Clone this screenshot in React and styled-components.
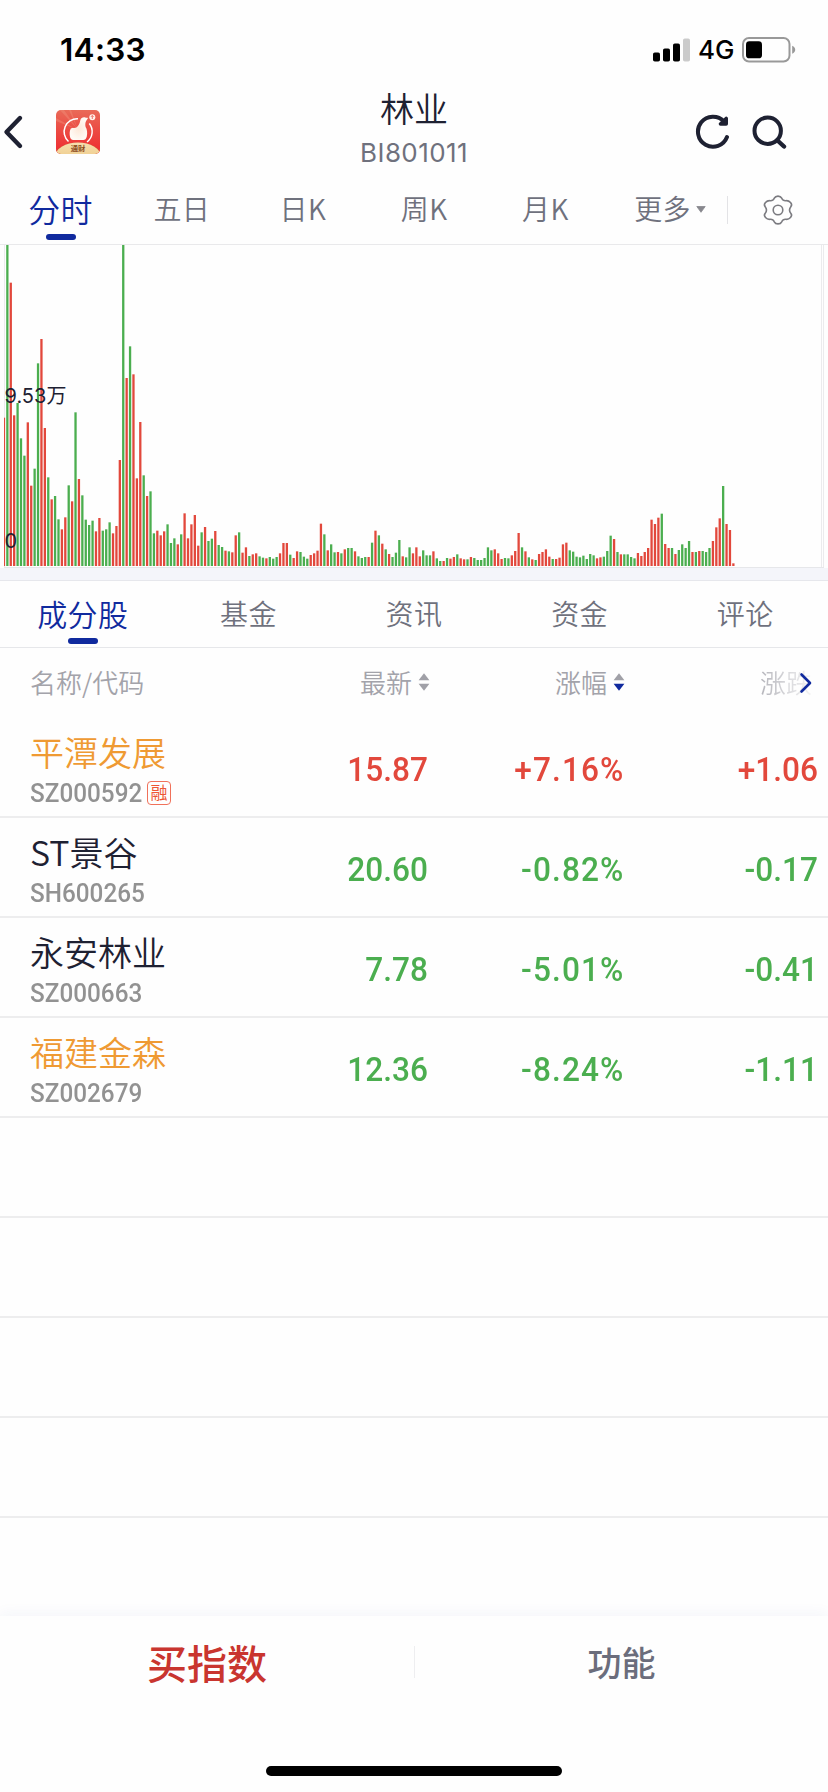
import React from "react";
import styled, { createGlobalStyle } from "styled-components";

const cjk = `"Noto Sans CJK SC", sans-serif`;
const ink = "#1e2132";
const blue = "#102a9e";
const grey = "#6f717d";
const red = "#e2483c";
const green = "#4bae4f";
const orange = "#ef9a33";

const Global = createGlobalStyle`
  * { box-sizing: border-box; }
  body { margin: 0; background: #fefefe; }
`;

const Screen = styled.div`
  width: 828px;
  height: 1792px;
  display: flex;
  flex-direction: column;
  overflow: hidden;
  background: #fefefe;
  color: ${ink};
  font-family: Inter, ${cjk};
`;

/* status bar */
const StatusBar = styled.div`
  height: 88px;
  padding: 12px 32px 0 60px;
  display: flex;
  align-items: center;
  justify-content: space-between;
  color: #000;
`;
const Clock = styled.div`
  font-size: 31.5px;
  font-weight: 600;
  line-height: 38px;
  letter-spacing: 0.3px;
`;
const StatusRight = styled.div`
  display: flex;
  align-items: center;
`;
const Network = styled.span`
  font-size: 26px;
  font-weight: 500;
  line-height: 30px;
  margin: 0 7px 0 7px;
  width: 37px;
`;

/* title bar */
const NavBar = styled.header`
  height: 88px;
  display: grid;
  grid-template-columns: 240px 1fr 240px;
  align-items: center;
`;
const NavLeft = styled.div`
  display: flex;
  align-items: center;
  gap: 32px;
  padding-left: 2px;
`;
const NavRight = styled.div`
  display: flex;
  align-items: center;
  justify-content: flex-end;
  gap: 20px;
  padding-right: 41px;
`;
const TitleBlock = styled.div`
  text-align: center;
`;
const Title = styled.h1`
  margin: -3px 0 3px;
  font: 350 34px/42px ${cjk};
`;
const Subtitle = styled.div`
  font-size: 26px;
  line-height: 42px;
  font-weight: 400;
  letter-spacing: 0.4px;
  color: ${grey};
`;

/* tabs */
const PeriodTabs = styled.nav`
  height: 69px;
  display: flex;
  border-bottom: 1px solid #e9e9eb;
`;
const SectionTabs = styled.nav`
  height: 67px;
  display: flex;
  border-bottom: 1px solid #e6e7ea;
`;
const Tab = styled.button`
  position: relative;
  width: ${(p) => p.$width}px;
  height: ${(p) => p.$height}px;
  padding: 0 0 ${(p) => (p.$active ? 4 : 3)}px;
  border: 0;
  background: none;
  display: flex;
  align-items: center;
  justify-content: center;
  font-family: ${cjk};
  font-weight: 350;
  font-size: ${(p) => (p.$active ? p.$activeSize : 28)}px;
  letter-spacing: 0.4px;
  line-height: 40px;
  color: ${(p) => (p.$active ? blue : grey)};
  &::after {
    content: "";
    display: ${(p) => (p.$active ? "block" : "none")};
    position: absolute;
    left: calc(50% - 15px);
    top: ${(p) => p.$underline}px;
    width: 30px;
    height: 6px;
    border-radius: 3px;
    background: ${blue};
  }
`;
const MoreArrow = styled.svg`
  margin: 2px -7px 0 5px;
`;
const TabDivider = styled.i`
  width: 1px;
  height: 28px;
  margin-top: 20px;
  background: #e3e3e6;
`;
const SettingsButton = styled.div`
  flex: 1;
  height: 68px;
  display: flex;
  align-items: center;
  justify-content: center;
`;

/* chart */
const Chart = styled.svg`
  display: block;
  width: 828px;
  height: 323px;
  flex: none;
`;
const ChartLabel = styled.text`
  font-family: Inter, ${cjk};
  font-size: 20px;
  fill: ${ink};
`;
const Band = styled.div`
  height: 13px;
  background: #f4f5fa;
  border-bottom: 1px solid #e6e7ec;
`;

/* table */
const TableHead = styled.div`
  height: 70px;
  padding-bottom: 2px;
  display: grid;
  grid-template-columns: 430px 195px 1fr;
  align-items: center;
  font: 350 26px/40px ${cjk};
  color: #a3a3aa;
`;
const HeadFirst = styled.div`
  display: flex;
  justify-content: space-between;
  padding-left: 30px;
`;
const SortLabel = styled.div`
  display: flex;
  align-items: center;
  justify-content: flex-end;
  gap: 6px;
`;
const ScrollLabel = styled.div`
  display: flex;
  align-items: center;
  padding-left: 135px;
`;
const Faded = styled.span`
  color: transparent;
  background: linear-gradient(90deg, #b4b4ba, #dcdcdf 60%, #f4f4f4);
  background-clip: text;
  -webkit-background-clip: text;
`;
const Chevron = styled.svg`
  margin: 1px 0 0 -13px;
`;
const Row = styled.div`
  height: 100px;
  border-bottom: 2px solid #ededee;
  display: grid;
  grid-template-columns: 228px 200px 195px 195px;
  align-items: center;
`;
const Stock = styled.div`
  padding: 11px 0 0 30px;
  white-space: nowrap;
`;
const StockName = styled.div`
  font: 350 34px/40px ${cjk};
  color: ${(p) => (p.$marked ? orange : ink)};
`;
const StockMeta = styled.div`
  display: flex;
  align-items: center;
  height: 42px;
`;
const StockCode = styled.span`
  width: 117px;
  font-family: Roboto, sans-serif;
  font-size: 26px;
  font-weight: 500;
  line-height: 40px;
  color: #929292;
  transform: scaleX(0.935);
  transform-origin: left;
`;
const Badge = styled.span`
  width: 24px;
  height: 24px;
  margin-top: 1px;
  border: 1px solid #f0715a;
  border-radius: 4px;
  font: 400 17px/20px ${cjk};
  text-align: center;
  color: #ee5634;
`;
const Figure = styled.div`
  text-align: right;
  font-family: Roboto, sans-serif;
  font-size: 34px;
  font-weight: 500;
  letter-spacing: ${(p) => (p.$wide ? 1.2 : 0)}px;
  line-height: 40px;
  padding-top: 4px;
  color: ${(p) => (p.$up ? red : green)};
  transform: scaleX(0.93);
  transform-origin: right;
  margin-right: ${(p) => (p.$wide ? -1.5 : 0)}px;
`;
const Spacer = styled.div`
  height: 98px;
`;

/* bottom bar */
const BottomBar = styled.footer`
  position: relative;
  height: 176px;
  display: grid;
  grid-template-columns: 414px 1px 413px;
  grid-template-rows: 92px;
  align-items: center;
  justify-items: center;
  background: #fefefe;
  box-shadow: 0 -2px 14px rgba(40, 60, 160, 0.05);
`;
const Buy = styled.div`
  margin-top: -1px;
  font: 500 40px/50px ${cjk};
  color: #c9352f;
`;
const Feature = styled.div`
  font: 500 34px/50px ${cjk};
  color: #6b6d7c;
`;
const BarDivider = styled.i`
  width: 1px;
  height: 32px;
  background: #eeeef0;
`;
const HomeIndicator = styled.i`
  position: absolute;
  left: 266px;
  bottom: 16px;
  width: 296px;
  height: 10px;
  border-radius: 5px;
  background: #000;
`;

/* one minute volume per entry: direction and height in thirds of a pixel */
const volumes = (
  "r445 g964 r850 r452 g489 g383 g331 r431 r241 g292 g608 r681 r414 g266 r200 g210 g140 r110 r146 g242 " +
  "r194 g461 r261 g212 g139 g123 g136 r104 r144 g106 g110 g131 r98 r120 r318 g964 r564 g659 r575 r263 " +
  "r432 g272 r210 g224 g98 r106 r92 r104 g125 g69 g83 r65 g95 r158 r83 r125 r153 r61 g101 r117 " +
  "g75 g82 r105 g63 g57 r46 g44 r41 r92 g101 r40 r56 g30 r35 r38 g29 g25 r23 g27 g22 " +
  "g27 r38 r69 r69 g34 r24 r44 g42 g28 g22 r33 r38 r46 r127 g95 r47 g65 g41 r42 g38 " +
  "r50 g54 g54 r44 g29 g24 g27 r27 g70 r106 g92 r67 g50 r36 g27 g40 g78 r29 g26 g56 " +
  "r38 r56 r29 g47 g32 g32 r44 g23 g15 r15 g24 r22 r27 g35 r23 r20 g20 r27 g24 g18 " +
  "g18 g24 g56 g47 r50 r38 r21 g24 g23 r32 r45 r99 g56 r44 g26 r20 g18 r36 r42 r50 " +
  "r28 g21 r21 r25 r65 r70 g47 g43 g28 g26 g31 g21 g36 g32 r23 r26 g28 g45 g91 r81 " +
  "g42 r35 g35 g35 g27 g23 r39 r30 r42 r54 r139 r126 r145 g157 r66 r54 g54 r36 g48 g65 " +
  "g54 g75 r42 g42 r45 g45 g42 g54 r75 r116 r143 g240 r126 r108 r8"
)
  .split(" ")
  .map((v) => ({ up: v[0] === "r", h: Number(v.slice(1)) / 3 }));

const stocks = [
  { name: "平潭发展", code: "SZ000592", badge: "融", marked: true, up: true, last: "15.87", pct: "+7.16%", diff: "+1.06" },
  { name: "ST景谷", code: "SH600265", last: "20.60", pct: "-0.82%", diff: "-0.17" },
  { name: "永安林业", code: "SZ000663", last: "7.78", pct: "-5.01%", diff: "-0.41" },
  { name: "福建金森", code: "SZ002679", marked: true, last: "12.36", pct: "-8.24%", diff: "-1.11" },
];

const Signal = () => (
  <svg width="38" height="24" viewBox="0 0 38 24">
    <rect x="0" y="14.5" width="7" height="9" rx="1.8" />
    <rect x="10" y="10.5" width="7" height="13" rx="1.8" />
    <rect x="20" y="5.5" width="7" height="18" rx="1.8" />
    <rect x="30" y="0.5" width="7" height="23" rx="1.8" fill="#cbcbcb" />
  </svg>
);

const Battery = () => (
  <svg width="54" height="26" viewBox="0 0 54 26">
    <rect x="1" y="1" width="46.5" height="23.5" rx="6" fill="none" stroke="#999" strokeWidth="2" />
    <rect x="4" y="4.3" width="16" height="17" rx="3.4" />
    <path d="M50.2 8.8c2 .8 3 2.3 3 4s-1 3.200-3 4z" fill="#999" />
  </svg>
);

const BackIcon = () => (
  <svg width="22" height="36" viewBox="0 0 22 36" fill="none" stroke={ink} strokeWidth="4.4" strokeLinecap="round" strokeLinejoin="round">
    <path d="M18 4L4.500 18L18 32" />
  </svg>
);

const Logo = () => (
  <svg width="44" height="44" viewBox="0 0 44 44">
    <defs>
      <linearGradient id="lg" x1="0" y1="0" x2="0" y2="1">
        <stop offset="0" stopColor="#e96a58" />
        <stop offset=".5" stopColor="#ec4841" />
        <stop offset="1" stopColor="#ef2b31" />
      </linearGradient>
      <radialGradient id="hand">
        <stop offset="0" stopColor="#fde8d8" />
        <stop offset="1" stopColor="#fffaf4" />
      </radialGradient>
      <linearGradient id="gold" x1="0" y1="0" x2="0" y2="1">
        <stop offset="0" stopColor="#f6dfae" />
        <stop offset="1" stopColor="#e9bf75" />
      </linearGradient>
      <clipPath id="lc"><rect width="44" height="44" rx="5" /></clipPath>
    </defs>
    <g clipPath="url(#lc)">
      <rect width="44" height="44" fill="url(#lg)" />
      <path d="M22 20L4 0h4zM22 20L13 0h2zM22 20L0 8v3z" fill="#f49a84" opacity=".35" />
      <path d="M22 8.800A13 13 0 0 0 12.500 31.500M33.300 13.500A13 13 0 0 1 31 32" fill="none" stroke="#fff" strokeWidth="1.500" />
      <path d="M14.800 18.500c2-1 4.500-.3 6-1.300c2-1.700 3-4 3.400-6.500c.6-3 3.200-3.800 5-3.200c1.300.5 2.200 0 2.800.5c-.8 2-3.600 3.700-2.400 9c1.500 2 2 6 1.200 9.500c-.6 2.500-1.700 3.500-3.500 3.500h-8.500c-2.800 0-4.300-.8-4.700-2.800c-.6-2.500-.7-6.500.7-8.700z" fill="url(#hand)" />
      <circle cx="36.300" cy="7.200" r="3" fill="#fff1ea" />
      <path d="M36.300 9V5.600M35 6.800l1.300-1.300l1.300 1.300" stroke="#e6564b" strokeWidth=".8" fill="none" />
      <ellipse cx="22" cy="46" rx="24" ry="13.500" fill="#d94730" />
      <ellipse cx="22" cy="46" rx="22.500" ry="13.500" fill="url(#gold)" />
    </g>
    <text x="22" y="41" textAnchor="middle" fontFamily="Noto Sans CJK SC" fontWeight="700" fontSize="7.300" fill="#8a4a20">通财</text>
  </svg>
);

const RefreshIcon = () => (
  <svg width="36" height="36" viewBox="0 0 36 36" fill="none" stroke={ink} strokeWidth="4" strokeLinecap="round" strokeLinejoin="round">
    <path d="M29 7.500A15 15 0 1 0 32 23" />
    <path d="M31.200 4.500V10H25.500Z" strokeWidth="3.600" fill={ink} />
  </svg>
);

const SearchIcon = () => (
  <svg width="36" height="36" viewBox="0 0 36 36" fill="none" stroke={ink} strokeWidth="4" strokeLinecap="round">
    <circle cx="16.700" cy="16.700" r="13.200" />
    <path d="M26.500 26.500L33 32.500" strokeWidth="4.400" />
  </svg>
);

const GearIcon = () => (
  <svg width="32" height="32" viewBox="0 0 32 32" fill="none" stroke="#7b7b80" strokeWidth="1.600" strokeLinejoin="round">
    <circle cx="16" cy="16" r="4.800" />
    <path d="M12.300 4.200C13.600 1.400 18.400 1.400 19.700 4.200C20.600 6.300 21.600 6.900 24 6.700C27.200 6.300 31.200 10 28.800 12.700C27.100 14.900 27.100 17.100 28.800 19.300C31.200 22 27.200 25.700 24 25.300C21.600 25.100 20.600 25.700 19.700 27.800C18.400 30.600 13.600 30.600 12.300 27.800C11.400 25.700 10.400 25.100 8 25.300C4.800 25.700 .8 22 3.200 19.300C4.900 17.100 4.900 14.900 3.200 12.700C.8 10 4.800 6.300 8 6.700C10.400 6.900 11.400 6.300 12.300 4.200Z" />
  </svg>
);

const SortIcon = ({ active }) => (
  <svg width="12" height="20" viewBox="0 0 12 20">
    <path d="M6 1.300L11.400 8.300H.6z" fill="#a0a0a7" />
    <path d="M6 18.700L11.400 11.700H.6z" fill={active ? blue : "#a0a0a7"} />
  </svg>
);

const VolumeChart = () => (
  <Chart viewBox="0 245 828 323">
    <path d="M4.500 245V568M821.500 245V568M823.500 245V568" stroke="#ebebed" />
    <path d="M4 567.500H824" stroke="#e6e7ea" />
    {volumes.map((v, i) => (
      <rect
        key={i}
        x={Math.max(4, 2.8 + i * 3.4085)}
        y={566 - v.h}
        width={i ? 2.3 : 1.1}
        height={v.h}
        fill={v.up ? red : green}
      />
    ))}
    <ChartLabel x="4.500" y="402.500">9.53万</ChartLabel>
    <ChartLabel x="4.500" y="548.300">0</ChartLabel>
  </Chart>
);

export default function App() {
  return (
    <Screen>
      <Global />
      <StatusBar>
        <Clock>14:33</Clock>
        <StatusRight>
          <Signal />
          <Network>4G</Network>
          <Battery />
        </StatusRight>
      </StatusBar>

      <NavBar>
        <NavLeft>
          <BackIcon />
          <Logo />
        </NavLeft>
        <TitleBlock>
          <Title>林业</Title>
          <Subtitle>BI801011</Subtitle>
        </TitleBlock>
        <NavRight>
          <RefreshIcon />
          <SearchIcon />
        </NavRight>
      </NavBar>

      <PeriodTabs>
        {["分时", "五日", "日K", "周K", "月K", "更多"].map((t, i) => (
          <Tab key={t} $active={i === 0} $activeSize={32} $width={121.2} $height={67} $underline={58}>
            {t}
            {t === "更多" && (
              <MoreArrow width="10" height="7" viewBox="0 0 10 7">
                <path d="M.8.500H9.200L5 6.300z" fill="#88888e" stroke="#88888e" strokeWidth=".8" strokeLinejoin="round" />
              </MoreArrow>
            )}
          </Tab>
        ))}
        <TabDivider />
        <SettingsButton>
          <GearIcon />
        </SettingsButton>
      </PeriodTabs>

      <VolumeChart />
      <Band />

      <SectionTabs>
        {["成分股", "基金", "资讯", "资金", "评论"].map((t, i) => (
          <Tab key={t} $active={i === 0} $activeSize={30} $width={165.6} $height={67} $underline={57}>
            {t}
          </Tab>
        ))}
      </SectionTabs>

      <TableHead>
        <HeadFirst>
          <span>名称/代码</span>
          <SortLabel>最新<SortIcon /></SortLabel>
        </HeadFirst>
        <SortLabel>涨幅<SortIcon active /></SortLabel>
        <ScrollLabel>
          <Faded>涨跌</Faded>
          <Chevron width="14" height="22" viewBox="0 0 14 22" fill="none" stroke={blue} strokeWidth="2.600" strokeLinecap="round" strokeLinejoin="round">
            <path d="M2.500 2.500L11 11L2.500 19.500" />
          </Chevron>
        </ScrollLabel>
      </TableHead>

      {stocks.map((s) => (
        <Row key={s.code}>
          <Stock>
            <StockName $marked={s.marked}>{s.name}</StockName>
            <StockMeta>
              <StockCode>{s.code}</StockCode>
              {s.badge && <Badge>{s.badge}</Badge>}
            </StockMeta>
          </Stock>
          <Figure $up={s.up}>{s.last}</Figure>
          <Figure $up={s.up} $wide>{s.pct}</Figure>
          <Figure $up={s.up}>{s.diff}</Figure>
        </Row>
      ))}
      <Row />
      <Row />
      <Row />
      <Row />
      <Spacer />

      <BottomBar>
        <Buy>买指数</Buy>
        <BarDivider />
        <Feature>功能</Feature>
        <HomeIndicator />
      </BottomBar>
    </Screen>
  );
}
